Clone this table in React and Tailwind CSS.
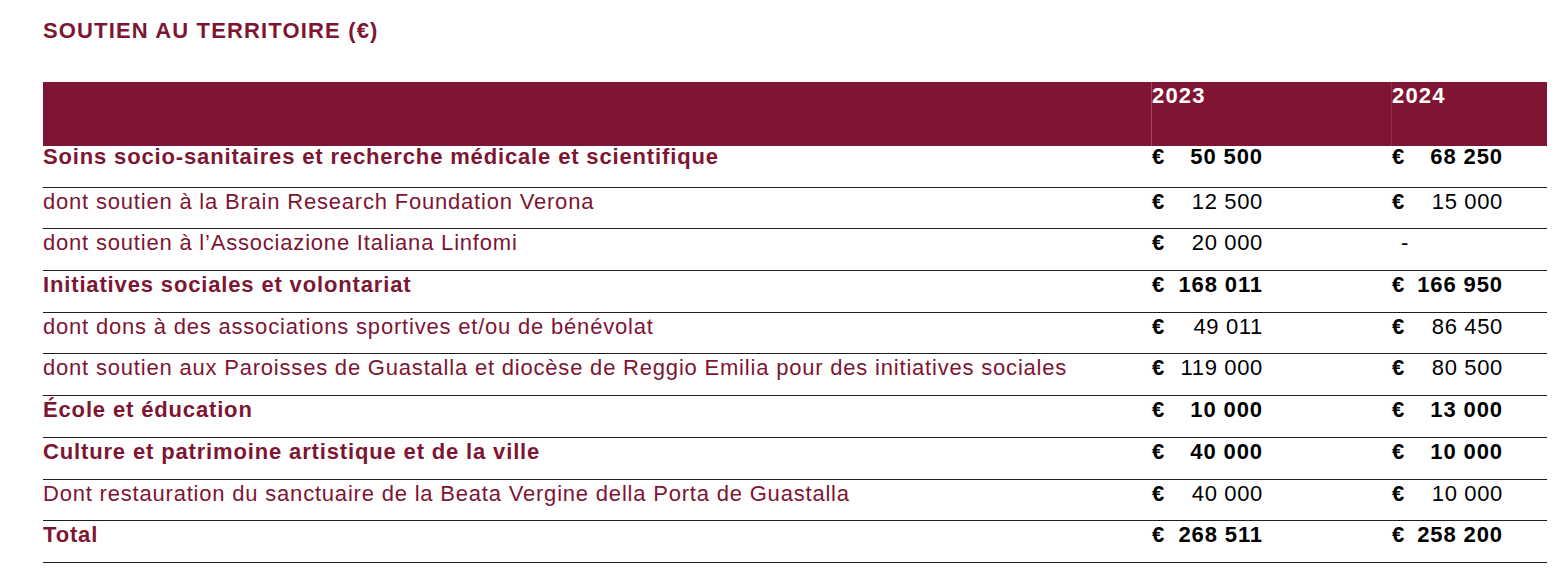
import React from 'react';

const ROWS = [
  { label: 'Soins socio-sanitaires et recherche médicale et scientifique', bold: true, y23: '50 500', y24: '68 250' },
  { label: 'dont soutien à la Brain Research Foundation Verona', y23: '12 500', y24: '15 000' },
  { label: 'dont soutien à l’Associazione Italiana Linfomi', y23: '20 000', y24: null },
  { label: 'Initiatives sociales et volontariat', bold: true, y23: '168 011', y24: '166 950' },
  { label: 'dont dons à des associations sportives et/ou de bénévolat', y23: '49 011', y24: '86 450' },
  { label: 'dont soutien aux Paroisses de Guastalla et diocèse de Reggio Emilia pour des initiatives sociales', y23: '119 000', y24: '80 500' },
  { label: 'École et éducation', bold: true, y23: '10 000', y24: '13 000' },
  { label: 'Culture et patrimoine artistique et de la ville', bold: true, y23: '40 000', y24: '10 000' },
  { label: 'Dont restauration du sanctuaire de la Beata Vergine della Porta de Guastalla', y23: '40 000', y24: '10 000' },
  { label: 'Total', bold: true, y23: '268 511', y24: '258 200' },
];

const Amount = ({ value, bold }) => {
  if (!value) {
    return <span className="pl-[9px] text-black">-</span>;
  }
  return (
    <div className={`flex w-[111px] justify-between text-black ${bold ? 'font-bold tracking-[0.9px]' : 'tracking-[0.65px]'}`}>
      <span className="font-bold tracking-normal">€</span>
      <span>{value}</span>
    </div>
  );
};

export default function App() {
  return (
    <div className="min-h-screen bg-white px-[43px] pt-[18px] font-['Liberation_Sans',Arial,sans-serif] text-[22px] leading-[22px]">
      <h1 className="font-bold text-[#7d1533] leading-[22px] pt-[2px] tracking-[1.15px]">SOUTIEN AU TERRITOIRE (€)</h1>

      <div className="mt-[40px] w-[1504px]">
        {/* Header */}
        <div className="flex h-[64px] bg-[#7f1533] text-white font-bold tracking-[1.2px]">
          <div className="w-[1108px]" />
          <div className="w-[240px] border-l border-[#9b4a62] pt-[3px]">2023</div>
          <div className="flex-1 border-l border-[#8f3049] pt-[3px]">2024</div>
        </div>

        {/* Rows */}
        {ROWS.map((row, i) => (
          <div
            key={i}
            className={`flex h-[41.7px] border-b border-[#1f1f1f] ${i === 0 ? 'pt-0' : 'pt-[3px]'}`}
          >
            <div className={`w-[1108px] text-[#7d1533] ${row.bold ? 'font-bold tracking-[0.85px]' : 'tracking-[0.8px]'}`}>
              {row.label}
            </div>
            <div className="w-[240px] pl-px">
              <Amount value={row.y23} bold={row.bold} />
            </div>
            <div className="flex-1 pl-px">
              <Amount value={row.y24} bold={row.bold} />
            </div>
          </div>
        ))}
      </div>
    </div>
  );
}
